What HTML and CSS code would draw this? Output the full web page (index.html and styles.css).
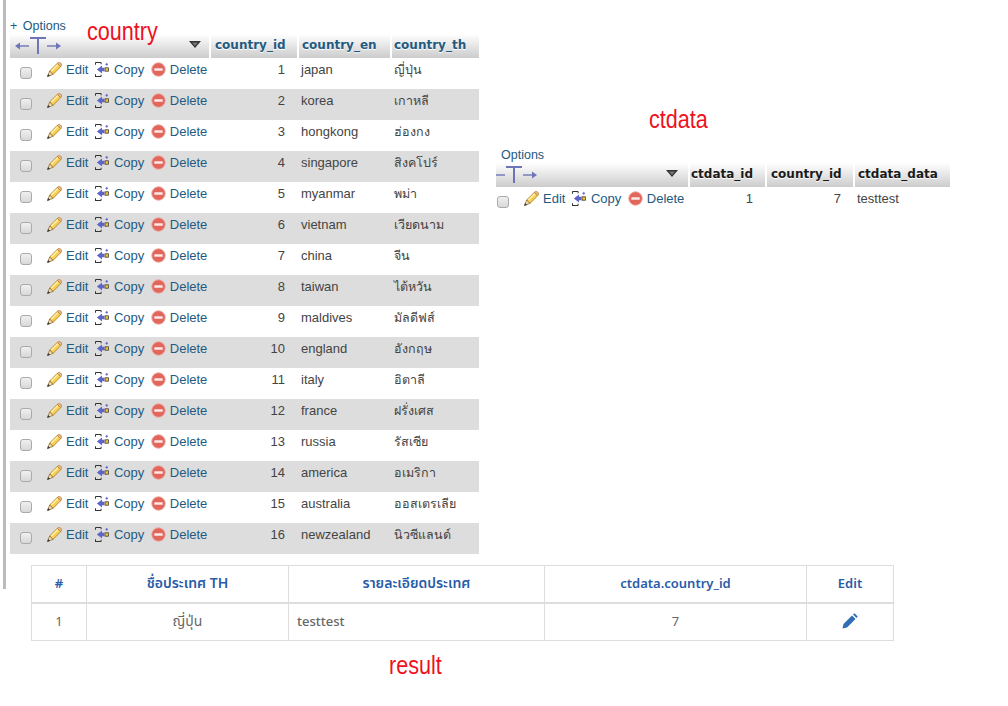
FILE: index.html
```html
<!DOCTYPE html>
<html lang="th">
<head>
<meta charset="utf-8">
<title>country, ctdata, result</title>
<link rel="stylesheet" href="styles.css">
</head>
<body>
<svg class="defs" width="0" height="0" aria-hidden="true">
  <symbol id="pencil" viewBox="0 0 16 16">
    <path d="M2.800 9.600 11 1.400 14.600 5 6.400 13.200z" fill="#f7cf55" stroke="#b5852c" stroke-width="1"/>
    <path d="M4.600 9.700 11.400 2.900" stroke="#fdf1b5" stroke-width="1.600"/>
    <path d="M11 1.400 12 .6C12.700.2 13.500.2 14.200.8L15.200 1.800C15.800 2.500 15.800 3.300 15.400 4L14.600 5z" fill="#eab48a" stroke="#b5852c" stroke-width=".8"/>
    <path d="M2.800 9.600.6 15.400 6.400 13.200z" fill="#f1dcae" stroke="#8a6a35" stroke-width=".8"/>
    <path d="M1.400 13.200.6 15.400 2.800 14.600z" fill="#333" stroke="#333" stroke-width=".6"/>
  </symbol>
  <symbol id="copy" viewBox="0 0 16 16">
    <path d="M0.500 0.500H6.500M0.500 0.500V3M0.500 13V15.500H6.500M6.500 0.500V2.500M6.500 13.500V15.500" fill="none" stroke="#333" stroke-width="1.100"/>
    <path d="M2 8 7.500 3.800V6.200H10V9.800H7.500V12.200z" fill="#5f64c8"/>
    <rect x="10.700" y="6.200" width="3.600" height="3.600" fill="#f4c430" stroke="#333" stroke-width=".8"/>
    <path d="M12.500 1V4M11.100 2.500H13.900" stroke="#5f64c8" stroke-width="1"/>
  </symbol>
  <symbol id="del" viewBox="0 0 16 16">
    <circle cx="8" cy="8" r="7.200" fill="#e2665b" stroke="#eda79f" stroke-width="1"/>
    <rect x="3.500" y="6.600" width="9" height="2.800" rx=".6" fill="#fbe9e7"/>
  </symbol>
  <symbol id="arrows" viewBox="0 0 46 18" preserveAspectRatio="xMinYMin">
    <path d="M5 9H14" stroke="#6d75b8" stroke-width="1.400"/>
    <path d="M0 9 5 5.500V12.500z" fill="#6d75b8"/>
    <path d="M15 1H31M23 1V17" fill="none" stroke="#6d75b8" stroke-width="2"/>
    <path d="M32 9H41" stroke="#6d75b8" stroke-width="1.400"/>
    <path d="M46 9 41 5.500V12.500z" fill="#6d75b8"/>
  </symbol>
  <symbol id="sort" viewBox="0 0 12 7">
    <path d="M0 0H12L6 7z" fill="#333"/>
    <path d="M3 1.500H9L6 5z" fill="#777"/>
  </symbol>
  <symbol id="pen-solid" viewBox="0 0 16 16">
    <path d="M.5 15.500 1.500 11 10 2.500 13.500 6 5 14.500z" fill="#2f6db5"/>
    <path d="M11 1.500 12.500.3 15.700 3.500 14.500 5z" fill="#2f6db5"/>
  </symbol>
</svg>

<div class="side-bar"></div>

<div class="top">
  <section class="left">
    <div class="opts-row">
      <a class="opts opts-plus">+ Options</a>
      <span class="label">country</span>
    </div>
    <table class="pma pma-country">
      <thead>
        <tr>
          <th class="th-tools"><span class="tools"><svg class="arrows"><use href="#arrows"/></svg><svg class="sort"><use href="#sort"/></svg></span></th>
          <th class="w-id">country_id</th>
          <th class="w-en">country_en</th>
          <th class="w-th">country_th</th>
        </tr>
      </thead>
      <tbody>
        <tr><td class="acts"><div class="act-row"><input class="chk" type="checkbox"><a class="act"><svg class="ic"><use href="#pencil"/></svg>Edit</a><a class="act"><svg class="ic"><use href="#copy"/></svg>Copy</a><a class="act"><svg class="ic"><use href="#del"/></svg>Delete</a></div></td><td class="num">1</td><td>japan</td><td class="thai">ญี่ปุ่น</td></tr>
        <tr><td class="acts"><div class="act-row"><input class="chk" type="checkbox"><a class="act"><svg class="ic"><use href="#pencil"/></svg>Edit</a><a class="act"><svg class="ic"><use href="#copy"/></svg>Copy</a><a class="act"><svg class="ic"><use href="#del"/></svg>Delete</a></div></td><td class="num">2</td><td>korea</td><td class="thai">เกาหลี</td></tr>
        <tr><td class="acts"><div class="act-row"><input class="chk" type="checkbox"><a class="act"><svg class="ic"><use href="#pencil"/></svg>Edit</a><a class="act"><svg class="ic"><use href="#copy"/></svg>Copy</a><a class="act"><svg class="ic"><use href="#del"/></svg>Delete</a></div></td><td class="num">3</td><td>hongkong</td><td class="thai">ฮ่องกง</td></tr>
        <tr><td class="acts"><div class="act-row"><input class="chk" type="checkbox"><a class="act"><svg class="ic"><use href="#pencil"/></svg>Edit</a><a class="act"><svg class="ic"><use href="#copy"/></svg>Copy</a><a class="act"><svg class="ic"><use href="#del"/></svg>Delete</a></div></td><td class="num">4</td><td>singapore</td><td class="thai">สิงคโปร์</td></tr>
        <tr><td class="acts"><div class="act-row"><input class="chk" type="checkbox"><a class="act"><svg class="ic"><use href="#pencil"/></svg>Edit</a><a class="act"><svg class="ic"><use href="#copy"/></svg>Copy</a><a class="act"><svg class="ic"><use href="#del"/></svg>Delete</a></div></td><td class="num">5</td><td>myanmar</td><td class="thai">พม่า</td></tr>
        <tr><td class="acts"><div class="act-row"><input class="chk" type="checkbox"><a class="act"><svg class="ic"><use href="#pencil"/></svg>Edit</a><a class="act"><svg class="ic"><use href="#copy"/></svg>Copy</a><a class="act"><svg class="ic"><use href="#del"/></svg>Delete</a></div></td><td class="num">6</td><td>vietnam</td><td class="thai">เวียดนาม</td></tr>
        <tr><td class="acts"><div class="act-row"><input class="chk" type="checkbox"><a class="act"><svg class="ic"><use href="#pencil"/></svg>Edit</a><a class="act"><svg class="ic"><use href="#copy"/></svg>Copy</a><a class="act"><svg class="ic"><use href="#del"/></svg>Delete</a></div></td><td class="num">7</td><td>china</td><td class="thai">จีน</td></tr>
        <tr><td class="acts"><div class="act-row"><input class="chk" type="checkbox"><a class="act"><svg class="ic"><use href="#pencil"/></svg>Edit</a><a class="act"><svg class="ic"><use href="#copy"/></svg>Copy</a><a class="act"><svg class="ic"><use href="#del"/></svg>Delete</a></div></td><td class="num">8</td><td>taiwan</td><td class="thai">ไต้หวัน</td></tr>
        <tr><td class="acts"><div class="act-row"><input class="chk" type="checkbox"><a class="act"><svg class="ic"><use href="#pencil"/></svg>Edit</a><a class="act"><svg class="ic"><use href="#copy"/></svg>Copy</a><a class="act"><svg class="ic"><use href="#del"/></svg>Delete</a></div></td><td class="num">9</td><td>maldives</td><td class="thai">มัลดีฟส์</td></tr>
        <tr><td class="acts"><div class="act-row"><input class="chk" type="checkbox"><a class="act"><svg class="ic"><use href="#pencil"/></svg>Edit</a><a class="act"><svg class="ic"><use href="#copy"/></svg>Copy</a><a class="act"><svg class="ic"><use href="#del"/></svg>Delete</a></div></td><td class="num">10</td><td>england</td><td class="thai">อังกฤษ</td></tr>
        <tr><td class="acts"><div class="act-row"><input class="chk" type="checkbox"><a class="act"><svg class="ic"><use href="#pencil"/></svg>Edit</a><a class="act"><svg class="ic"><use href="#copy"/></svg>Copy</a><a class="act"><svg class="ic"><use href="#del"/></svg>Delete</a></div></td><td class="num">11</td><td>italy</td><td class="thai">อิตาลี</td></tr>
        <tr><td class="acts"><div class="act-row"><input class="chk" type="checkbox"><a class="act"><svg class="ic"><use href="#pencil"/></svg>Edit</a><a class="act"><svg class="ic"><use href="#copy"/></svg>Copy</a><a class="act"><svg class="ic"><use href="#del"/></svg>Delete</a></div></td><td class="num">12</td><td>france</td><td class="thai">ฝรั่งเศส</td></tr>
        <tr><td class="acts"><div class="act-row"><input class="chk" type="checkbox"><a class="act"><svg class="ic"><use href="#pencil"/></svg>Edit</a><a class="act"><svg class="ic"><use href="#copy"/></svg>Copy</a><a class="act"><svg class="ic"><use href="#del"/></svg>Delete</a></div></td><td class="num">13</td><td>russia</td><td class="thai">รัสเซีย</td></tr>
        <tr><td class="acts"><div class="act-row"><input class="chk" type="checkbox"><a class="act"><svg class="ic"><use href="#pencil"/></svg>Edit</a><a class="act"><svg class="ic"><use href="#copy"/></svg>Copy</a><a class="act"><svg class="ic"><use href="#del"/></svg>Delete</a></div></td><td class="num">14</td><td>america</td><td class="thai">อเมริกา</td></tr>
        <tr><td class="acts"><div class="act-row"><input class="chk" type="checkbox"><a class="act"><svg class="ic"><use href="#pencil"/></svg>Edit</a><a class="act"><svg class="ic"><use href="#copy"/></svg>Copy</a><a class="act"><svg class="ic"><use href="#del"/></svg>Delete</a></div></td><td class="num">15</td><td>australia</td><td class="thai">ออสเตรเลีย</td></tr>
        <tr><td class="acts"><div class="act-row"><input class="chk" type="checkbox"><a class="act"><svg class="ic"><use href="#pencil"/></svg>Edit</a><a class="act"><svg class="ic"><use href="#copy"/></svg>Copy</a><a class="act"><svg class="ic"><use href="#del"/></svg>Delete</a></div></td><td class="num">16</td><td>newzealand</td><td class="thai">นิวซีแลนด์</td></tr>
      </tbody>
    </table>
  </section>

  <section class="right">
    <div class="label label-ct">ctdata</div>
    <a class="opts opts-ct">Options</a>
    <table class="pma pma-ct">
      <thead>
        <tr>
          <th class="th-tools-ct"><span class="tools tools-ct"><svg class="arrows arrows-ct"><use href="#arrows"/></svg><svg class="sort"><use href="#sort"/></svg></span></th>
          <th class="w-cid">ctdata_id</th>
          <th class="w-ccid">country_id</th>
          <th class="w-cdata">ctdata_data</th>
        </tr>
      </thead>
      <tbody>
        <tr><td class="acts acts-ct"><div class="act-row"><input class="chk" type="checkbox"><a class="act"><svg class="ic"><use href="#pencil"/></svg>Edit</a><a class="act"><svg class="ic"><use href="#copy"/></svg>Copy</a><a class="act"><svg class="ic"><use href="#del"/></svg>Delete</a></div></td><td class="num">1</td><td class="num">7</td><td>testtest</td></tr>
      </tbody>
    </table>
  </section>
</div>

<table class="result">
  <thead>
    <tr>
      <th class="r-1">#</th>
      <th class="r-2"><span class="th-thai">ชื่อประเทศ TH</span></th>
      <th class="r-3"><span class="th-thai">รายละเอียดประเทศ</span></th>
      <th class="r-4">ctdata.country_id</th>
      <th class="r-5">Edit</th>
    </tr>
  </thead>
  <tbody>
    <tr>
      <td>1</td>
      <td class="r-thai">ญี่ปุ่น</td>
      <td class="r-left">testtest</td>
      <td>7</td>
      <td><svg class="pen"><use href="#pen-solid"/></svg></td>
    </tr>
  </tbody>
</table>

<div class="label label-result">result</div>
</body>
</html>
```

FILE: styles.css
```css
* { box-sizing: border-box; }

html, body { margin: 0; padding: 0; background: #fff; }

body {
  position: relative;
  width: 1008px;
  height: 706px;
  overflow: hidden;
  font-family: "Liberation Sans", "Noto Sans", sans-serif;
  font-size: 13px;
  color: #444;
}

.defs { position: absolute; }

.side-bar {
  position: absolute;
  left: 3px;
  top: 0;
  width: 3px;
  height: 589px;
  background: #bbb;
}

.top {
  display: flex;
  align-items: flex-start;
  margin-left: 10px;
  height: 554px;
}

.left { width: 469px; padding-top: 18px; }

.right { width: 454px; margin-left: 17px; }

.opts-row {
  display: flex;
  align-items: flex-start;
  gap: 21px;
  height: 16px;
}

.opts {
  display: block;
  font-size: 12.500px;
  line-height: 16px;
  color: #235a81;
}

.opts-plus { word-spacing: 2px; }

.label {
  display: block;
  font-family: "Liberation Sans", sans-serif;
  font-size: 26px;
  line-height: 26px;
  color: #ee1122;
  white-space: nowrap;
  transform: scaleX(.83);
  transform-origin: left center;
}

.label-ct {
  margin: 106px 0 0 153px;
  height: 34px;
}

.opts-ct { margin-left: 5px; height: 23px; padding-top: 7px; line-height: 16px; }

.pma {
  table-layout: fixed;
  border-collapse: separate;
  border-spacing: 0;
}

.pma-country { width: 469px; }

.pma-ct { width: 454px; }

.pma th {
  height: 24px;
  padding: 0 2px 2px 4px;
  border-right: 2px solid #fff;
  background: linear-gradient(#fff, #ccc);
  color: #235a81;
  font-family: "DejaVu Sans", sans-serif;
  font-size: 12px;
  font-weight: bold;
  text-align: left;
  text-shadow: 0 1px 0 #fff;
  white-space: nowrap;
  overflow: hidden;
}

.pma-ct th { color: #1a1a1a; padding-left: 1px; }

.pma th:last-child { border-right: 0; }

.pma .th-tools { width: 201px; padding: 0; }

.pma .w-id { width: 88px; }
.pma .w-en { width: 93px; padding-left: 3px; }
.pma .w-th { width: 87px; padding-left: 2px; }

.pma .th-tools-ct { width: 194px; padding: 0; }

.w-cid { width: 77px; }
.w-ccid { width: 88px; }
.w-cdata { width: 95px; }

.pma-ct .w-ccid { padding-left: 4px; }
.pma-ct .w-cdata { padding-left: 3px; }

.tools {
  display: flex;
  align-items: center;
  justify-content: space-between;
  padding: 0 8px 0 5px;
}

.tools-ct { padding: 0 10px 0 0; overflow: hidden; }

.arrows { width: 46px; height: 18px; flex: none; }

.arrows-ct { margin-left: -5px; }

.sort { width: 12px; height: 7px; flex: none; margin-bottom: 3px; }

.pma td {
  height: 31px;
  padding: 4px 2px 0 2px;
  vertical-align: top;
  line-height: 16px;
  white-space: nowrap;
}

.pma-country tbody tr:nth-child(even) td { background: #ddd; }

.pma-ct td { height: 24px; padding-top: 4px; }

.pma td.num { padding-right: 14px; text-align: right; }

.pma td.thai { font-size: 12.500px; }

.pma td.acts { padding: 0; }

.act-row {
  display: flex;
  align-items: flex-start;
  padding: 4px 0 0 10px;
}

.acts-ct .act-row { padding-left: 1px; }

.chk {
  appearance: none;
  flex: none;
  width: 12px;
  height: 12px;
  margin: 5px 15px 0 0;
  border: 1px solid #aaa;
  border-radius: 3px;
  background: linear-gradient(#f0f0f0, #d8d8d8);
}

.act {
  display: flex;
  align-items: flex-start;
  gap: 4px;
  margin-right: 6.500px;
  color: #235a81;
}

.ic { width: 15px; height: 15px; flex: none; }

.result {
  width: 862px;
  margin: 11px 0 0 31px;
  table-layout: fixed;
  border-collapse: collapse;
  font-family: "Noto Sans", "Noto Sans Thai", "Liberation Sans", sans-serif;
  font-size: 13px;
  color: #666;
}

.result th, .result td {
  border: 1px solid #ddd;
  text-align: center;
}

.result th {
  height: 37px;
  padding-bottom: 2px;
  border-bottom-width: 2px;
  color: #2a5ca8;
  font-weight: 600;
}

.th-thai { font-size: 14px; }

.result td { height: 38px; padding-bottom: 2px; }

.result td.r-thai { font-size: 14px; }

.result td.r-left { padding-left: 8px; text-align: left; font-weight: 500; }

.r-1 { width: 55px; }
.r-2 { width: 202px; }
.r-3 { width: 256px; }
.r-4 { width: 262px; }
.r-5 { width: 87px; }

.pen { width: 16px; height: 16px; display: inline-block; vertical-align: middle; margin-bottom: 2px; }

.label-result { margin: 11px 0 0 389px; }
```
